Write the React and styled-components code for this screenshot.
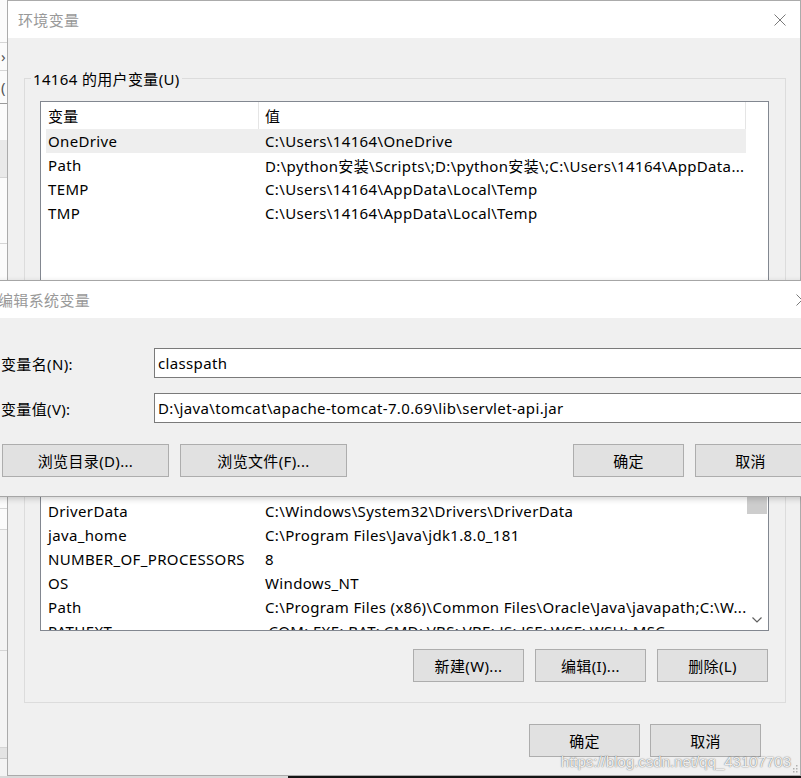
import React from "react";
import styled, { createGlobalStyle } from "styled-components";

const FONT = `"Noto Sans", "Noto Sans CJK SC", sans-serif`;
const SPACING = "0.35px";

const GlobalStyle = createGlobalStyle`
  html, body {
    margin: 0;
    padding: 0;
    background: #f3f3f3;
  }
  body {
    font-family: ${FONT};
    font-size: 15px;
    letter-spacing: ${SPACING};
    color: #000;
  }
  * {
    box-sizing: border-box;
  }
`;

const userVars = [
  { name: "OneDrive", value: "C:\\Users\\14164\\OneDrive", selected: true },
  { name: "Path", value: "D:\\python安装\\Scripts\\;D:\\python安装\\;C:\\Users\\14164\\AppData..." },
  { name: "TEMP", value: "C:\\Users\\14164\\AppData\\Local\\Temp" },
  { name: "TMP", value: "C:\\Users\\14164\\AppData\\Local\\Temp" },
];

const systemVars = [
  { name: "ComSpec", value: "C:\\Windows\\system32\\cmd.exe" },
  { name: "DriverData", value: "C:\\Windows\\System32\\Drivers\\DriverData" },
  { name: "java_home", value: "C:\\Program Files\\Java\\jdk1.8.0_181" },
  { name: "NUMBER_OF_PROCESSORS", value: "8" },
  { name: "OS", value: "Windows_NT" },
  { name: "Path", value: "C:\\Program Files (x86)\\Common Files\\Oracle\\Java\\javapath;C:\\W..." },
  { name: "PATHEXT", value: ".COM;.EXE;.BAT;.CMD;.VBS;.VBE;.JS;.JSE;.WSF;.WSH;.MSC" },
  { name: "PROCESSOR_ARCHITECTURE", value: "AMD64" },
];

// strip of the window that sits behind, at the left edge
const backRows = [
  { h: 42, bg: "#fbfbfb", line: "#d5d5d5" },
  { h: 27, bg: "#fbfbfb", line: "#d5d5d5", glyph: "›" },
  { h: 32, bg: "#fbfbfb", line: "#9a9a9a", glyph: "(" },
  { h: 36, bg: "#fbfbfb" },
  { h: 37, bg: "#e9e9e9", line: "#d5d5d5" },
  { h: 65, bg: "#fbfbfb", line: "#d5d5d5" },
  { h: 264, bg: "#fbfbfb", line: "#d5d5d5" },
  { h: 20, bg: "#fbfbfb", line: "#d5d5d5" },
  { h: 120, bg: "#f4f4f4", line: "#d5d5d5" },
  { h: 96, bg: "#f4f4f4", line: "#d5d5d5" },
  { h: 10, bg: "#e4e4e4", line: "#c8c8c8" },
  { h: 20, bg: "#f4f4f4" },
];

const CloseIcon = () => (
  <svg width="12" height="12" viewBox="0 0 12 12">
    <path d="M0.5 0.5 L11.5 11.5 M11.5 0.5 L0.5 11.5" stroke="#7a7a7a" strokeWidth="1" fill="none" />
  </svg>
);

const ChevronDown = () => (
  <svg width="10" height="6" viewBox="0 0 10 6">
    <path d="M0.5 0.5 L5 5 L9.5 0.5" stroke="#606060" strokeWidth="1.2" fill="none" />
  </svg>
);

const VarList = ({ rows, height, scroll }) => (
  <ListBox $height={height}>
    <ListBody>
      <HeaderRow>
        <NameHead>变量</NameHead>
        <ValueHead>值</ValueHead>
      </HeaderRow>
      {rows.map((r, i) => (
        <Row key={i} $selected={r.selected}>
          <NameCell>{r.name}</NameCell>
          <ValueCell>{r.value}</ValueCell>
        </Row>
      ))}
    </ListBody>
    {scroll && (
      <ScrollBar>
        <ScrollArrow />
        <ScrollThumb />
        <ScrollTrack />
        <ScrollArrow>
          <ChevronDown />
        </ScrollArrow>
      </ScrollBar>
    )}
  </ListBox>
);

const App = () => {
  return (
    <>
      <GlobalStyle />
      <Desktop>
        <BackWindow>
          {backRows.map((r, i) => (
            <BackRow key={i} $h={r.h} $bg={r.bg} $line={r.line}>
              {r.glyph}
            </BackRow>
          ))}
        </BackWindow>

        <MainWindow>
          <TitleBar>
            <Title>环境变量</Title>
            <CloseIcon />
          </TitleBar>
          <MainBody>
            <GroupBox $top={40}>
              <Legend>14164 的用户变量(U)</Legend>
              <VarList rows={userVars} height={228} />
              <ButtonRow>
                <Button>新建(N)...</Button>
                <Button>编辑(E)...</Button>
                <Button>删除(D)</Button>
              </ButtonRow>
            </GroupBox>
            <GroupBox $top={23}>
              <Legend>系统变量(S)</Legend>
              <VarList rows={systemVars} height={184} scroll />
              <ButtonRow>
                <Button>新建(W)...</Button>
                <Button>编辑(I)...</Button>
                <Button>删除(L)</Button>
              </ButtonRow>
            </GroupBox>
            <Footer>
              <Button>确定</Button>
              <Button>取消</Button>
            </Footer>
          </MainBody>
          <Grip width="6" height="8" viewBox="0 0 6 8">
            <rect x="4" y="0" width="1.5" height="1.5" fill="#b0b0b0" />
            <rect x="4" y="3" width="1.5" height="1.5" fill="#b0b0b0" />
            <rect x="1" y="3" width="1.5" height="1.5" fill="#b0b0b0" />
            <rect x="4" y="6" width="1.5" height="1.5" fill="#b0b0b0" />
            <rect x="1" y="6" width="1.5" height="1.5" fill="#b0b0b0" />
          </Grip>
        </MainWindow>

        <EditDialog>
          <TitleBar $left={9}>
            <Title>编辑系统变量</Title>
            <CloseIcon />
          </TitleBar>
          <DialogBody>
            <FieldRow>
              <FieldLabel>变量名(N):</FieldLabel>
              <TextField readOnly defaultValue="classpath" />
            </FieldRow>
            <FieldRow $gap={15}>
              <FieldLabel>变量值(V):</FieldLabel>
              <TextField readOnly defaultValue="D:\java\tomcat\apache-tomcat-7.0.69\lib\servlet-api.jar" />
            </FieldRow>
            <DialogButtons>
              <WideButton>浏览目录(D)...</WideButton>
              <WideButton>浏览文件(F)...</WideButton>
              <Spacer />
              <Button>确定</Button>
              <Button>取消</Button>
            </DialogButtons>
          </DialogBody>
        </EditDialog>

        <Watermark>https://blog.csdn.net/qq_43107703</Watermark>
        <Taskbar />
      </Desktop>
    </>
  );
};

const Desktop = styled.div`
  position: relative;
  width: 801px;
  height: 778px;
  overflow: hidden;
  background: #f3f3f3;
  display: flex;
  flex-direction: column;
  justify-content: flex-end;
`;

const Taskbar = styled.div`
  height: 2px;
  background: linear-gradient(to right, #d9d9d9 0, #d9d9d9 288px, #141414 288px);
`;

const BackWindow = styled.div`
  position: absolute;
  left: 0;
  top: 0;
  width: 8px;
  height: 776px;
  display: flex;
  flex-direction: column;
  overflow: hidden;
`;

const BackRow = styled.div`
  flex: 0 0 auto;
  height: ${(p) => p.$h + (p.$line ? 1 : 0)}px;
  background: ${(p) => p.$bg};
  border-bottom: ${(p) => (p.$line ? `1px solid ${p.$line}` : "none")};
  font-size: 15px;
  color: #555;
  line-height: ${(p) => p.$h}px;
  padding-left: 1px;
  overflow: hidden;
`;

const MainWindow = styled.div`
  position: absolute;
  left: 7px;
  top: 0;
  width: 794px;
  height: 776px;
  border: 1px solid #ababab;
  background: #f0f0f0;
  display: flex;
  flex-direction: column;
`;

const TitleBar = styled.div`
  flex: 0 0 37px;
  height: 37px;
  background: #fff;
  display: flex;
  align-items: center;
  justify-content: space-between;
  padding: 0 14px 0 ${(p) => p.$left ?? 10}px;
`;

const Title = styled.span`
  font-size: 15px;
  color: #999;
  white-space: nowrap;
`;

const MainBody = styled.div`
  flex: 1;
  display: flex;
  flex-direction: column;
  padding: 0 14px 0 16px;
`;

const GroupBox = styled.div`
  margin-top: ${(p) => p.$top}px;
  border: 1px solid #dcdcdc;
  padding: 0 16px 20px 15px;
  display: flex;
  flex-direction: column;
`;

const Legend = styled.div`
  align-self: flex-start;
  margin: -10px 0 0 -9px;
  padding: 0 2px;
  height: 20px;
  line-height: 20px;
  background: #f0f0f0;
  font-size: 15px;
  white-space: nowrap;
`;

const ListBox = styled.div`
  margin-top: 12px;
  height: ${(p) => p.$height}px;
  border: 1px solid #828790;
  background: #fff;
  display: flex;
  overflow: hidden;
`;

const ListBody = styled.div`
  width: 700px;
  margin-left: 5px;
  display: flex;
  flex-direction: column;
  overflow: hidden;
`;

const HeaderRow = styled.div`
  flex: 0 0 27px;
  display: flex;
  align-items: stretch;
`;

const NameHead = styled.div`
  width: 213px;
  padding-left: 2px;
  border-right: 1px solid #e5e5e5;
  display: flex;
  align-items: center;
`;

const ValueHead = styled.div`
  flex: 1;
  padding-left: 6px;
  border-right: 1px solid #e5e5e5;
  display: flex;
  align-items: center;
`;

const Row = styled.div`
  flex: 0 0 24px;
  display: flex;
  align-items: center;
  background: ${(p) => (p.$selected ? "#eeeeee" : "transparent")};
  white-space: nowrap;
`;

const NameCell = styled.div`
  width: 213px;
  padding-left: 2px;
  overflow: hidden;
`;

const ValueCell = styled.div`
  flex: 1;
  min-width: 0;
  padding: 0 3px 0 6px;
  overflow: hidden;
`;

const ScrollBar = styled.div`
  width: 20px;
  margin-left: 1px;
  display: flex;
  flex-direction: column;
`;

const ScrollArrow = styled.div`
  flex: 0 0 20px;
  display: flex;
  align-items: center;
  justify-content: center;
`;

const ScrollThumb = styled.div`
  flex: 0 0 46px;
  background: #cdcdcd;
`;

const ScrollTrack = styled.div`
  flex: 1;
`;

const ButtonRow = styled.div`
  margin-top: 18px;
  display: flex;
  justify-content: flex-end;
  gap: 11px;
  padding-right: 1px;
`;

const Button = styled.button`
  width: 111px;
  height: 33px;
  padding: 0;
  border: 1px solid #adadad;
  background: #e1e1e1;
  font-family: ${FONT};
  font-size: 15px;
  letter-spacing: ${SPACING};
  color: #000;
  white-space: nowrap;
`;

const WideButton = styled(Button)`
  width: 167px;
`;

const Footer = styled.div`
  margin-top: 21px;
  margin-right: 25px;
  display: flex;
  justify-content: flex-end;
  gap: 10px;
`;

const Grip = styled.svg`
  position: absolute;
  right: 2px;
  bottom: 2px;
`;

const EditDialog = styled.div`
  position: absolute;
  left: -12px;
  top: 280px;
  width: 835px;
  border: 1px solid #a6a6a6;
  background: #f0f0f0;
  box-shadow: 0 2px 6px rgba(0, 0, 0, 0.18);
  display: flex;
  flex-direction: column;
`;

const DialogBody = styled.div`
  display: flex;
  flex-direction: column;
  padding: 30px 16px 19px 12px;
`;

const FieldRow = styled.div`
  display: flex;
  align-items: center;
  height: 30px;
  margin-top: ${(p) => p.$gap ?? 0}px;
`;

const FieldLabel = styled.div`
  width: 153px;
  flex: 0 0 153px;
  font-size: 15px;
  white-space: nowrap;
`;

const TextField = styled.input`
  flex: 1;
  height: 30px;
  border: 1px solid #7a7a7a;
  background: #fff;
  padding: 0 3px;
  font-family: ${FONT};
  font-size: 15px;
  letter-spacing: ${SPACING};
  color: #000;
  outline: none;
`;

const DialogButtons = styled.div`
  margin-top: 21px;
  margin-left: 1px;
  display: flex;
  gap: 11px;
`;

const Spacer = styled.div`
  flex: 1;
`;

const Watermark = styled.div`
  position: absolute;
  right: 10px;
  bottom: 8px;
  font-family: "Liberation Sans", Arial, sans-serif;
  font-size: 15px;
  letter-spacing: 0;
  color: rgba(255, 255, 255, 0.9);
  text-shadow: 0 0 1px rgba(0, 0, 0, 0.55), 0 0 2px rgba(0, 0, 0, 0.25);
  white-space: nowrap;
  pointer-events: none;
`;

export default App;
